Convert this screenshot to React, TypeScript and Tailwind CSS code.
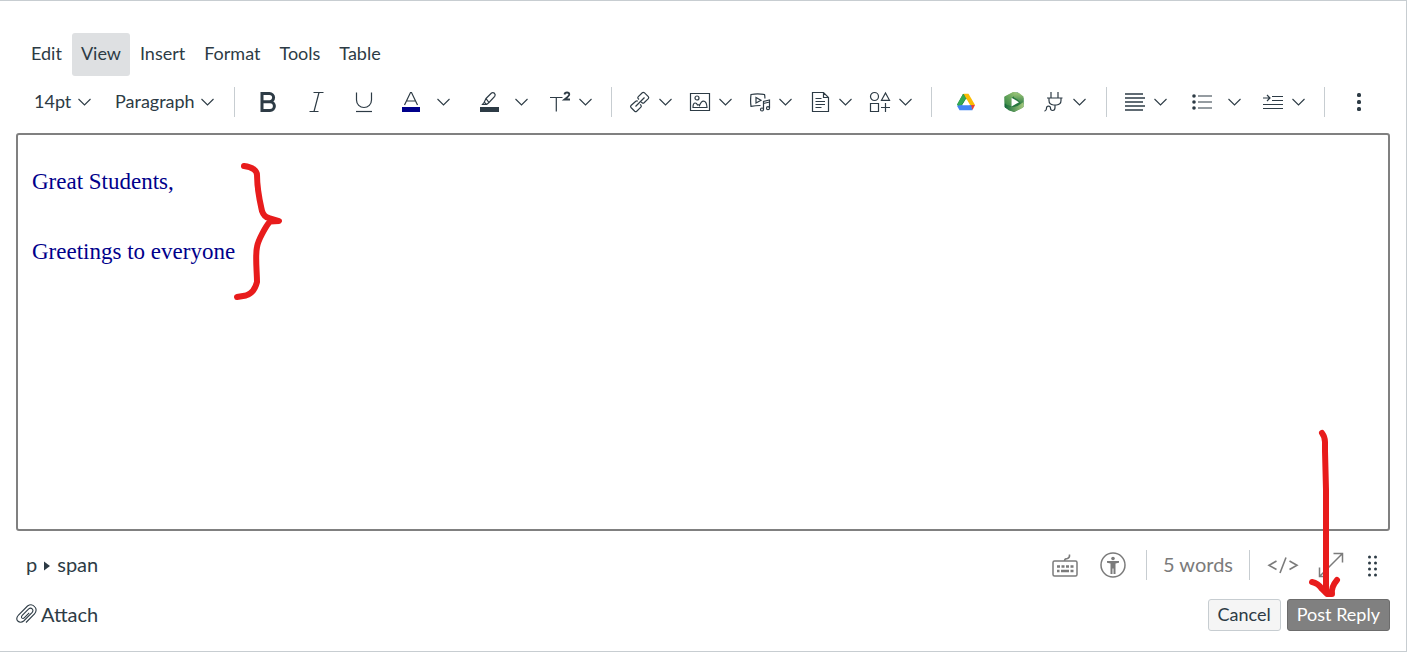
import type { ReactNode } from "react";

const menus = ["Edit", "View", "Insert", "Format", "Tools", "Table"];

interface IconProps {
  children: ReactNode;
  className?: string;
}

// toolbar icons share a 24px box
const Icon = ({ children, className = "" }: IconProps) => (
  <svg
    viewBox="0 0 24 24"
    fill="none"
    stroke="currentColor"
    strokeWidth="1.2"
    aria-hidden="true"
    className={`size-6 shrink-0 ${className}`}
  >
    {children}
  </svg>
);

const Chevron = ({ className = "" }: { className?: string }) => (
  <svg
    viewBox="0 0 13 8"
    fill="none"
    stroke="currentColor"
    strokeWidth="1.1"
    aria-hidden="true"
    className={`h-2 w-[13px] shrink-0 ${className}`}
  >
    <path d="M0.5 1 6.5 7l6-6" />
  </svg>
);

const Divider = () => <div className="h-[30px] w-px shrink-0 bg-[#c7cdd1]" />;

const PlainButton = ({ label, children }: { label: string; children: ReactNode }) => (
  <button type="button" aria-label={label} className="flex h-9 w-12 shrink-0 items-center justify-center">
    {children}
  </button>
);

const MenuButton = ({ label, children }: { label: string; children: ReactNode }) => (
  <button type="button" aria-label={label} className="flex h-9 w-15 shrink-0 items-center gap-[7px] pl-1">
    {children}
    <Chevron />
  </button>
);

const SplitButton = ({ label, children }: { label: string; children: ReactNode }) => (
  <div className="flex h-9 w-[78px] shrink-0 items-center">
    <button type="button" aria-label={label} className="flex h-9 items-center pr-2 pl-[11px]">
      {children}
    </button>
    <button type="button" aria-label={`${label} options`} className="flex h-9 items-center px-1.5">
      <Chevron />
    </button>
  </div>
);

interface PickerProps {
  label: string;
  options: string[];
  className: string;
}

const Picker = ({ label, options, className }: PickerProps) => (
  <div className={`grid shrink-0 items-center ${className}`}>
    <select
      aria-label={label}
      className="col-start-1 row-start-1 w-full appearance-none bg-transparent pb-[3px] text-lg leading-6"
    >
      {options.map((option) => (
        <option key={option}>{option}</option>
      ))}
    </select>
    <Chevron className="pointer-events-none col-start-1 row-start-1 justify-self-end" />
  </div>
);

const Toolbar = () => (
  <div className="mb-[5px] flex h-13 items-center">
    <div className="flex items-center gap-6 pr-5 pl-[34px]">
      <Picker label="Font size" options={["14pt", "12pt", "18pt"]} className="w-[57px]" />
      <Picker label="Block format" options={["Paragraph", "Heading 2"]} className="w-[99px]" />
    </div>
    <Divider />
    <div className="flex items-center pr-[7px] pl-[9px]">
      <PlainButton label="Bold">
        <Icon>
          <path strokeWidth="3" d="M6 3.5h7.5a4 4 0 0 1 0 8.2H6zM6 11.7h8a4.4 4.4 0 0 1 0 8.8H6z" />
        </Icon>
      </PlainButton>
      <PlainButton label="Italic">
        <Icon>
          <path d="M9.500 2.500h10M5.500 21.500h9M15 2.500 10 21.500" />
        </Icon>
      </PlainButton>
      <PlainButton label="Underline">
        <Icon>
          <path d="M4.500 2.500v7.500a7.500 7.500 0 0 0 15 0V2.500" />
          <path d="M4 21.500h16" />
        </Icon>
      </PlainButton>
      <SplitButton label="Text color">
        <Icon>
          <path d="M5.500 15 11.500 2.500h1L18.500 15M7.500 11h9" />
          <path fill="#00008b" stroke="none" d="M3 17h18v5H3z" />
        </Icon>
      </SplitButton>
      <SplitButton label="Highlight color">
        <Icon>
          <path d="M9 8.500 14.500 3q1.500-1 3 .300 1.300 1.500.200 3L12 12.500zM9 8.500l-1.800 3.800-1.700 2.200h4.200L12 12.500M7.200 12.300l2.200 2" />
          <path fill="currentColor" stroke="none" d="M3 17h19v5H3z" />
        </Icon>
      </SplitButton>
      <MenuButton label="Superscript">
        <Icon>
          <path d="M2 7.500h12.500M8.300 7.500V21.500" />
          <path strokeWidth="1.8" d="M16.500 4.500q.3-2 2.500-2t2.300 1.800q0 1.700-4.800 5.200H22" />
        </Icon>
      </MenuButton>
    </div>
    <Divider />
    <div className="flex items-center pr-[7px] pl-3">
      <MenuButton label="Links">
        <Icon>
          <path d="M11 9.500l-1-1q-.6-1 .3-1.900l4-3.900q1-.8 2 0l4 4q.9 1 0 2l-4.200 4.100q-1 .8-2 0l-1-1" />
          <path d="M9.800 11.200q-1-.8-2 0L3 15.500q-.9 1 0 2l3.700 3.700q1 .8 2 0l4.200-4q.9-1 0-2l-.8-.9" />
          <path d="M7.500 16.500 16.500 7.500" />
        </Icon>
      </MenuButton>
      <MenuButton label="Images">
        <Icon>
          <path d="M2.500 3.500h19v17h-19z" />
          <circle cx="9" cy="8" r="2" />
          <path d="M5 17.500c0-3 .8-4.500 2.200-4.500 1.300 0 1.800.700 2.300 2 1-.5 1.700-.2 2 .5 1-2.500 2.300-4.300 3.900-4.300 2.300 0 3.400 2.300 3.600 6.300z" />
        </Icon>
      </MenuButton>
      <MenuButton label="Media">
        <Icon>
          <path d="M12.500 15.500q-5 0-9.500.9-.8-5.900 0-11.900 6.500-1.200 13.500 0 .5 2 .4 4" />
          <path d="M8 7.500v5.600l5-2.800z" />
          <path d="M15.500 19.500V11.500l6-1.500v8M15.500 13.500l6-1.500" />
          <circle cx="14" cy="19.500" r="1.500" />
          <circle cx="20" cy="18.200" r="1.500" />
        </Icon>
      </MenuButton>
      <MenuButton label="Documents">
        <Icon>
          <path d="M4.500 2.500h11l5 5v14h-16zM15.500 2.500v5h5M7.500 8.500h6M7.500 11.500h9.500M7.500 14.500h9.500M7.500 17.500h6" />
        </Icon>
      </MenuButton>
      <MenuButton label="Apps and icons">
        <Icon>
          <circle cx="6.500" cy="6.500" r="4" />
          <path d="M13.500 10.300 17.500 3l4 7.300zM2.500 13.500h8v8h-8zM17.500 13v9M13 17.500h9" />
        </Icon>
      </MenuButton>
    </div>
    <Divider />
    <div className="flex items-center pr-2 pl-[10px]">
      <PlainButton label="Google Drive">
        <Icon>
          <g stroke="none">
            <path fill="#188038" d="M9 4h3l1.500 3.800-6.300 8.700L3 15z" />
            <path fill="#34a853" d="M9 4 3 14.500 5.500 18 12 8z" />
            <path fill="#fbbc04" d="M9.500 3.800h5L21 15h-5z" />
            <path fill="#ea4335" d="M16 15h5l-2.500 5z" />
            <path fill="#4285f4" d="M7.500 15H17l1.500 5.300h-13L3 15.800z" />
            <path fill="#fff" d="M12 8.700 15.700 15.300H8.300z" />
          </g>
        </Icon>
      </PlainButton>
      <PlainButton label="Panopto">
        <Icon>
          <defs>
            <linearGradient id="panoptoTop" x1="0" y1="1" x2="1" y2="0">
              <stop offset="0" stopColor="#2f8540" />
              <stop offset="1" stopColor="#a5c97c" />
            </linearGradient>
            <linearGradient id="panoptoRight" x1="0" y1="0" x2="0" y2="1">
              <stop offset="0" stopColor="#9cc578" />
              <stop offset="1" stopColor="#1f7440" />
            </linearGradient>
            <linearGradient id="panoptoBase" x1="0" y1="0" x2="1" y2="0">
              <stop offset="0" stopColor="#12683a" />
              <stop offset="1" stopColor="#a5c97c" />
            </linearGradient>
          </defs>
          <g stroke="none">
            <path fill="#27763f" d="M2.500 7 11 2.500h5L21.500 8v9L12 22l-9-4.500z" />
            <path fill="url(#panoptoTop)" d="M2.500 6.500 11 2q3-.3 5 1.500L9.500 8v8q-4 .5-7-3z" />
            <path fill="url(#panoptoRight)" d="M12 4 17 3l4.500 3.500V14l-3 2q1-5-6.500-8.500z" />
            <path fill="url(#panoptoBase)" d="M2.500 13q3 4 9 4l4-1 6-4v4.500q-1 2-4 3l-5.500 2.500L7 20.500 2.500 17z" />
            <path fill="#fff" d="m9.500 7.800 7.500 4.400-7.500 4.400z" />
          </g>
        </Icon>
      </PlainButton>
      <MenuButton label="Apps">
        <Icon>
          <path d="M9 2v6M16 2v6M5 8h15.500M7 8v2.500q0 4 4.500 4.500h3q4.500-.5 4.500-4.500V8M13 15v2.500q0 3-2.300 3-2.200 0-2.200-2.300 0-2-2-2t-2 2q.2 2-2 3" />
        </Icon>
      </MenuButton>
    </div>
    <Divider />
    <div className="flex items-center pr-[7px] pl-3">
      <MenuButton label="Alignment">
        <Icon>
          <path strokeWidth="1.500" d="M2 4h18M2 8h20M2 12h18M2 16h20M2 20h18" />
        </Icon>
      </MenuButton>
      <SplitButton label="Bulleted list">
        <Icon>
          <path d="M8 6h14M8 12h14M8 18h14" />
          <g fill="currentColor" stroke="none">
            <circle cx="4" cy="6" r="1.800" />
            <circle cx="4" cy="12" r="1.800" />
            <circle cx="4" cy="18" r="1.800" />
          </g>
        </Icon>
      </SplitButton>
      <MenuButton label="Increase indent">
        <Icon>
          <path d="M11 6.500h11M11 10.500h11M2 14.500h20M2 18.500h20M2 8h7M6 5l3 3-3 3" />
        </Icon>
      </MenuButton>
    </div>
    <Divider />
    <div className="pl-2.5">
      <PlainButton label="More">
        <Icon>
          <g fill="currentColor" stroke="none">
            <rect x="10" y="3" width="4" height="4" rx="1.500" />
            <rect x="10" y="10" width="4" height="4" rx="1.500" />
            <rect x="10" y="17" width="4" height="4" rx="1.500" />
          </g>
        </Icon>
      </PlainButton>
    </div>
  </div>
);

const StatusBar = () => (
  <div className="flex h-[68px] items-center justify-between pr-4 pl-[26px]">
    <div className="flex items-center gap-[7px] pb-[3px] text-xl">
      <span>p</span>
      <svg viewBox="0 0 6 10" fill="currentColor" aria-hidden="true" className="mt-1 h-2.5 w-1.5">
        <path d="M0 0.500 6 5 0 9.500z" />
      </svg>
      <span>span</span>
    </div>
    <div className="flex items-center text-[#7b7b7b]">
      <PlainButton label="Keyboard shortcuts">
        <svg viewBox="0 0 28 28" fill="none" stroke="currentColor" strokeWidth="1.500" aria-hidden="true" className="size-7">
          <rect x="2" y="10" width="24" height="15" rx="1.500" />
          <path d="M13.500 10q0-2.500 3-2.500Q19 6.500 18.500 3.500" />
          <path strokeWidth="2.500" strokeDasharray="3 1.500" d="M6 15.500h17" />
          <path strokeWidth="2.500" d="M6 20h2.500M10 20h8M19.500 20h3" />
        </svg>
      </PlainButton>
      <PlainButton label="Accessibility checker">
        <svg viewBox="0 0 28 28" fill="none" stroke="currentColor" strokeWidth="1.500" aria-hidden="true" className="size-7">
          <circle cx="14" cy="14" r="12" />
          <g fill="currentColor" stroke="none">
            <circle cx="14" cy="7.500" r="1.800" />
            <path d="M8 10h12v1.800l-3.500.7V23h-2v-5.500h-1V23h-2V12.500L8 11.800z" />
          </g>
        </svg>
      </PlainButton>
      <div className="w-[9px]" />
      <Divider />
      <button type="button" className="px-4 pb-[3px] text-xl">
        5 words
      </button>
      <Divider />
      <div className="w-[9px]" />
      <PlainButton label="HTML editor">
        <svg viewBox="0 0 32 24" fill="none" stroke="currentColor" strokeWidth="1.600" aria-hidden="true" className="h-6 w-8">
          <path d="M9.500 8 2 12.300l7.500 4.200M22.500 8l7.500 4.300-7.500 4.200M19 4.500 13 20" />
        </svg>
      </PlainButton>
      <PlainButton label="Fullscreen">
        <svg viewBox="0 0 28 28" fill="none" stroke="currentColor" strokeWidth="1.500" aria-hidden="true" className="size-7">
          <path d="M2.500 25.500 25.500 2.500M16.500 2.500h9v9M2.500 16.500v9h9" />
        </svg>
      </PlainButton>
      <button type="button" aria-label="Resize" className="flex h-9 w-[35px] items-center justify-center text-[#2d3b45]">
        <svg viewBox="0 0 12 24" fill="currentColor" aria-hidden="true" className="h-6 w-3">
          {[4, 10, 16, 22].map((y) => (
            <g key={y}>
              <circle cx="2.500" cy={y} r="1.500" />
              <circle cx="8.500" cy={y} r="1.500" />
            </g>
          ))}
        </svg>
      </button>
    </div>
  </div>
);

export default function App() {
  return (
    <main className="mr-[3px] border-t border-r border-b border-[#c7cdd1] bg-white pt-8 pb-5 font-['Lato',sans-serif] text-[#2d3b45]">
      <nav className="flex gap-px pl-[22px]">
        {menus.map((menu) => (
          <button
            key={menu}
            type="button"
            className={`h-[43px] rounded-[3px] px-[9px] pb-[3px] text-lg ${menu === "View" ? "bg-[#dee0e2]" : ""}`}
          >
            {menu}
          </button>
        ))}
      </nav>
      <Toolbar />

      <div className="relative mx-4 min-h-[398px] rounded-[3px] border-2 border-[#808080] px-3.5 pt-[29px]">
        <div
          role="textbox"
          aria-label="Reply"
          aria-multiline="true"
          contentEditable
          suppressContentEditableWarning
          className="font-['Liberation_Serif',serif] text-[23px] leading-[35px] text-[#00008b] outline-none"
        >
          <p className="mb-[35px]">Great Students,</p>
          <p>Greetings to everyone</p>
        </div>
        {/* hand-drawn brace over the message */}
        <svg
          viewBox="230 160 56 144"
          fill="none"
          stroke="#e81c1c"
          strokeWidth="6"
          strokeLinecap="round"
          strokeLinejoin="round"
          aria-hidden="true"
          className="pointer-events-none absolute top-[25px] left-[212px] h-36 w-14"
        >
          <path d="M244 166C253 167 257 171 257 175C257 190 260 202 262 211Q264 217 269 218L279 221L270 221.500C266 226 258 240 257 247C255 256 257 272 257 282C255 290 251 294 246 295.500L237 297" />
        </svg>
      </div>

      <StatusBar />

      <div className="flex h-8 items-center justify-between px-4">
        <button type="button" className="flex items-center gap-1 pb-[3px] text-xl">
          <svg viewBox="0 0 21 21" fill="none" stroke="currentColor" strokeWidth="1.100" aria-hidden="true" className="size-[21px]">
            <path d="M10 19.500l8.500-8.500q3-4 .4-7-3-4-7.400-1L2.500 12q-3 3.500-.8 6 2.800 2.500 6 0l8.500-8.700q1.500-2-.1-3.500-1.600-1.300-3.400.1L6 12.700q-1 1.400 0 2.400 1.200.8 2.200-.2l5-5" />
          </svg>
          Attach
        </button>
        <div className="flex gap-1.5">
          <button type="button" className="h-8 rounded-[3px] border border-[#c7cdd1] bg-[#f5f5f5] px-[9px] pb-0.5 text-lg leading-6">
            Cancel
          </button>
          <div className="relative">
            <button type="button" className="h-8 rounded-[3px] border border-[#6c6c6c] bg-[#808080] px-[9px] pb-0.5 text-lg leading-6 text-white">
              Post Reply
            </button>
            {/* hand-drawn arrow pointing at the button */}
            <svg
              viewBox="1305 427 40 176"
              fill="none"
              stroke="#e81c1c"
              strokeWidth="6"
              strokeLinecap="round"
              strokeLinejoin="round"
              aria-hidden="true"
              className="pointer-events-none absolute right-[45px] bottom-7 h-44 w-10"
            >
              <path d="M1322 433Q1325 437 1325 442V451L1326 490V592" />
              <path d="M1312 582Q1318 583 1322 589L1327 594L1332 594Q1331 587 1337 580" />
            </svg>
          </div>
        </div>
      </div>
    </main>
  );
}
